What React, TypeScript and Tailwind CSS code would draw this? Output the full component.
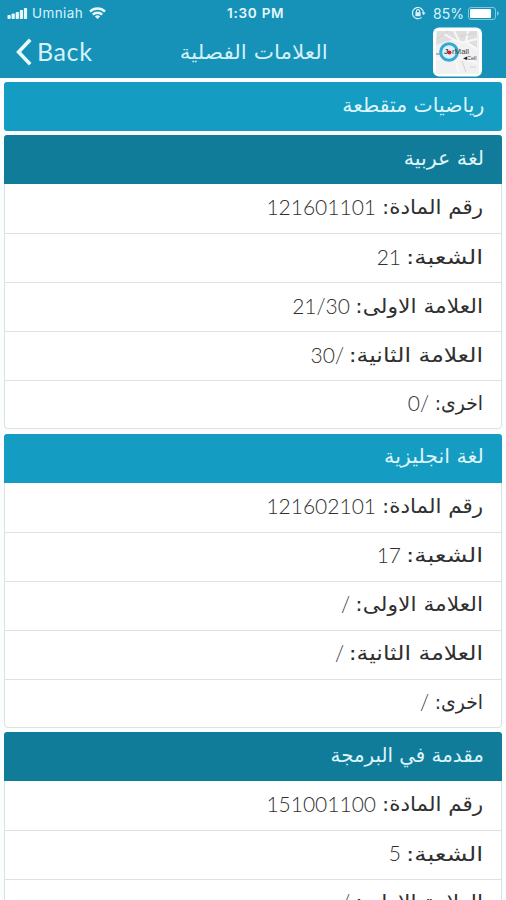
import React from 'react';

interface Row {
  label: string;
  value: string;
}

interface Course {
  id: number;
  name: string;
  nameClass: string;
  rows: Row[];
}

const labelClass: Record<string, string> = {
  'رقم المادة:': 'w-[100px] scale-x-[1.07]',
  'الشعبة:': 'w-[75px] scale-x-[1.23]',
  'العلامة الاولى:': 'w-[126px] scale-x-[1.09]',
  'العلامة الثانية:': 'w-[132px] scale-x-[1.18]',
  'اخرى:': 'w-[47px] scale-x-[0.94]',
};

const courses: Course[] = [
  { id: 1, name: 'رياضيات متقطعة', nameClass: 'scale-x-[1.02]', rows: [] },
  {
    id: 2,
    name: 'لغة عربية',
    nameClass: 'scale-x-[1.03]',
    rows: [
      { label: 'رقم المادة:', value: '121601101' },
      { label: 'الشعبة:', value: '21' },
      { label: 'العلامة الاولى:', value: '21/30' },
      { label: 'العلامة الثانية:', value: '/30' },
      { label: 'اخرى:', value: '/0' },
    ],
  },
  {
    id: 3,
    name: 'لغة انجليزية',
    nameClass: 'scale-x-[1.03]',
    rows: [
      { label: 'رقم المادة:', value: '121602101' },
      { label: 'الشعبة:', value: '17' },
      { label: 'العلامة الاولى:', value: '/' },
      { label: 'العلامة الثانية:', value: '/' },
      { label: 'اخرى:', value: '/' },
    ],
  },
  {
    id: 4,
    name: 'مقدمة في البرمجة',
    nameClass: 'scale-x-[0.99]',
    rows: [
      { label: 'رقم المادة:', value: '151001100' },
      { label: 'الشعبة:', value: '5' },
      { label: 'العلامة الاولى:', value: '/' },
    ],
  },
];

const StatusBar = () => (
  <div className="relative flex h-[26px] items-center justify-between pl-[7px] pr-[6px] font-['Inter',sans-serif] text-[13px] text-[#d9f2fa]">
    <div className="flex items-center">
      <svg width="21" height="11" viewBox="0 0 21 11" fill="#e6f8fd">
        <rect x="0.5" y="7" width="3.2" height="4" rx="0.8" />
        <rect x="4.6" y="5.5" width="3.2" height="5.5" rx="0.8" />
        <rect x="8.7" y="4" width="3.2" height="7" rx="0.8" />
        <rect x="12.8" y="2" width="3.2" height="9" rx="0.8" />
        <rect x="16.9" y="0" width="3.2" height="11" rx="0.8" />
      </svg>
      <span className="ml-[4px] text-[13.5px] tracking-[0.4px]">Umniah</span>
      <svg className="ml-[6px]" width="17" height="12" viewBox="0 0 17 12" fill="none" stroke="#e6f8fd" strokeWidth="2.4">
        <path d="M1 4.6a10.6 10.6 0 0 1 15 0" />
        <path d="M3.8 7.7a6.6 6.6 0 0 1 9.4 0" />
        <path d="M8.5 12 5.9 9.6a3.7 3.7 0 0 1 5.2 0z" fill="#e6f8fd" stroke="none" />
      </svg>
    </div>
    <span className="absolute left-[227px] text-[13.5px] font-semibold tracking-[0.75px] text-[#e6f8fd]">1:30 PM</span>
    <div className="flex items-center">
      <svg width="15" height="14" viewBox="0 0 15 14" fill="none" stroke="#d9f2fa" strokeWidth="1.2">
        <path d="M10.6 11.4A5.6 5.6 0 1 1 12.6 7" />
        <path d="M10.6 6.6h4l-2 2.6z" fill="#d9f2fa" stroke="none" />
        <rect x="4.4" y="6.2" width="5.2" height="4" fill="#d9f2fa" stroke="none" />
        <path d="M5.4 6.4V5.2a1.6 1.6 0 0 1 3.2 0v1.2" />
      </svg>
      <span className="ml-[7px] text-[14px]">85%</span>
      <svg className="ml-[4px]" width="32" height="13" viewBox="0 0 32 13">
        <rect x="0.5" y="0.5" width="27" height="12" rx="2.5" fill="none" stroke="#7cc9e0" />
        <rect x="2" y="2" width="21" height="9" rx="1.2" fill="#fff" />
        <path d="M29 4.3c2.4.4 2.4 4 0 4.4z" fill="#7cc9e0" />
      </svg>
    </div>
  </div>
);

const AppLogo = () => (
  <svg className="ml-auto" width="50" height="50" viewBox="0 0 50 50">
    <rect x="1" y="0.5" width="49" height="49" rx="6" fill="#fff" />
    <rect x="4" y="4" width="43" height="43" rx="2" fill="#f1f1f2" />
    <path d="M5 4h40v17L34 15 22 12 4 18z" fill="#dededf" />
    <path d="M22 4 28 16 22 27 27 46M45 12 28 16 12 7M4 32 22 29 45 36M36 4 34 15 45 22" fill="none" stroke="#f8f8f8" strokeWidth="2" />
    <path d="M5 12 12 7 16 4M30 34 34 45M28 9 44 6M38 40h6" fill="none" stroke="#d3d3d6" strokeWidth="1" />
    <path d="M4 27h5" stroke="#777" strokeWidth="1" />
    <circle cx="17" cy="25" r="8.3" fill="#dff1f8" stroke="#35a9d6" strokeWidth="3" />
    <text x="12" y="27" fontSize="8" fontWeight="bold" fontFamily="Liberation Sans" fill="#444">J</text>
    <text x="20" y="27" fontSize="8" fontFamily="Liberation Sans" fill="#444" textLength="17" lengthAdjust="spacingAndGlyphs">rMall</text>
    <circle cx="17.5" cy="25.5" r="2" fill="#d81e2c" />
    <path d="m31 31.5 4-2v3.5z" fill="#222" />
    <text x="35" y="32.5" fontSize="5.5" fontFamily="Liberation Sans" fill="#444">Cell</text>
  </svg>
);

const Header = () => (
  <header className="h-[78px] bg-[#1692b9]">
    <StatusBar />
    <div className="relative flex h-[52px] items-center justify-between pl-[16px] pr-[24px]">
      <div className="flex items-center">
        <svg width="16" height="28" viewBox="0 0 16 28" fill="none" stroke="#e9f9fd" strokeWidth="3.6">
          <path d="M14.2 1.8 2.6 14l11.6 12.2" />
        </svg>
        <span className="ml-[5px] pb-[2px] font-['Lato',sans-serif] text-[25px] leading-none tracking-[0.6px] text-[#d9f2fa]">Back</span>
      </div>
      <h1
        dir="rtl"
        className="absolute right-[178px] origin-right scale-x-[1.075] whitespace-nowrap font-['DejaVu_Sans',sans-serif] text-[20px] text-[#d3f0f8]"
      >
        العلامات الفصلية
      </h1>
      <AppLogo />
    </div>
  </header>
);

const CourseCard = ({ course, dark }: { course: Course; dark: boolean }) => (
  <section className="overflow-hidden rounded-[3px] bg-white">
    <h2 className={`flex h-[49px] items-center px-[18px] pb-[4px] text-[20px] text-[#dcf4fa] ${dark ? 'bg-[#117b9a]' : 'bg-[#159cc2]'}`}>
      <span className={`origin-right whitespace-nowrap ${course.nameClass}`}>{course.name}</span>
    </h2>
    {course.rows.length > 0 && (
      <div className="rounded-b-[4px] border-x border-b border-[#e0e0e0]">
        {course.rows.map((row) => (
          <div
            key={row.label}
            className="flex h-[49px] items-center gap-[7px] border-b border-[#e0e0e0] px-[18px] text-[20px] text-[#303030] first:h-[50px] last:h-[47px] last:border-b-0"
          >
            <span className={`shrink-0 origin-right whitespace-nowrap pb-[3px] ${labelClass[row.label]}`}>{row.label}</span>
            <span className="pb-[4px] font-['Lato',sans-serif] text-[21px] font-light">{row.value}</span>
          </div>
        ))}
      </div>
    )}
  </section>
);

const App = () => (
  <div className="h-[900px] w-[506px] overflow-hidden bg-[#fbfefe]">
    <Header />
    <main dir="rtl" className="flex flex-col gap-[4.4px] px-[4px] pt-[4px] font-['DejaVu_Sans',sans-serif]">
      {courses.map((course, i) => (
        <CourseCard key={course.id} course={course} dark={i % 2 === 1} />
      ))}
    </main>
  </div>
);

export default App;
